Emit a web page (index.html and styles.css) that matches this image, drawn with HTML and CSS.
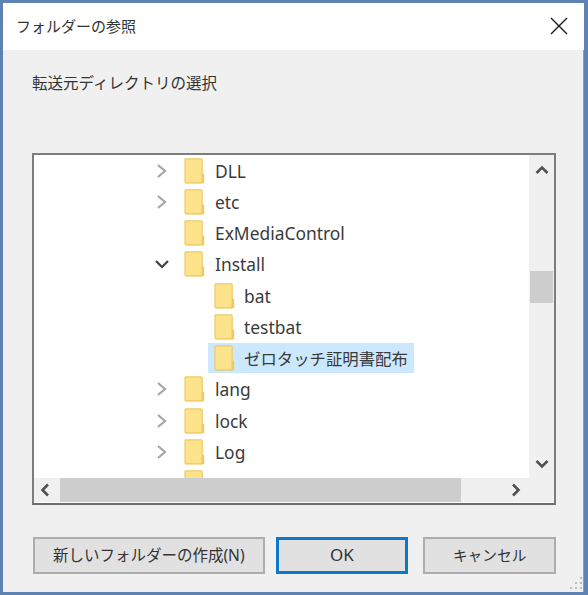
FILE: index.html
```html
<!DOCTYPE html>
<html lang="ja">
<head>
    <meta charset="UTF-8">
    <title>フォルダーの参照</title>
    <link rel="stylesheet" href="styles.css">
</head>
<body>
    <svg class="defs" width="0" height="0">
        <symbol id="folder" viewBox="0 0 21 26">
            <path d="M1 1.5 Q1 .8 1.8 .8 H17 Q18.2 .8 18.2 2 V24.8 H2 Q1 24.8 1 24 Z" fill="#fde38c" stroke="#eecb68" stroke-width="1.2"/>
            <path d="M18 15.5 H19.2 Q20.2 15.5 20.2 16.5 V24.2 Q20.2 25.2 19.2 25.2 H2 Q1.4 25.2 1 24.6 H17.6 Z" fill="#f1c95f"/>
        </symbol>
        <symbol id="chev-right" viewBox="0 0 14 16">
            <path d="M3 2 L10 8 L3 14" fill="none" stroke="#a6a6a6" stroke-width="2.2"/>
        </symbol>
        <symbol id="chev-down" viewBox="0 0 14 16">
            <path d="M1 5 L7 11 L13 5" fill="none" stroke="#404040" stroke-width="2.2"/>
        </symbol>
    </svg>

    <div class="dialog">
        <div class="titlebar">
            <span class="title">フォルダーの参照</span>
            <svg class="close" width="18" height="18" viewBox="0 0 18 18">
                <path d="M1 1 L17 17 M17 1 L1 17" stroke="#1a1a1a" stroke-width="1.4" fill="none"/>
            </svg>
        </div>

        <div class="content">
            <p class="prompt">転送元ディレクトリの選択</p>

            <div class="tree-box">
                <div class="tree">
                    <div class="row">
                        <svg class="chev"><use href="#chev-right"/></svg>
                        <svg class="folder"><use href="#folder"/></svg>
                        <span class="name">DLL</span>
                    </div>
                    <div class="row">
                        <svg class="chev"><use href="#chev-right"/></svg>
                        <svg class="folder"><use href="#folder"/></svg>
                        <span class="name">etc</span>
                    </div>
                    <div class="row">
                        <span class="chev"></span>
                        <svg class="folder"><use href="#folder"/></svg>
                        <span class="name">ExMediaControl</span>
                    </div>
                    <div class="row">
                        <svg class="chev"><use href="#chev-down"/></svg>
                        <svg class="folder"><use href="#folder"/></svg>
                        <span class="name">Install</span>
                    </div>
                    <div class="row child">
                        <svg class="folder"><use href="#folder"/></svg>
                        <span class="name">bat</span>
                    </div>
                    <div class="row child">
                        <svg class="folder"><use href="#folder"/></svg>
                        <span class="name">testbat</span>
                    </div>
                    <div class="row child">
                        <div class="sel-box">
                            <svg class="folder"><use href="#folder"/></svg>
                            <span class="name">ゼロタッチ証明書配布</span>
                        </div>
                    </div>
                    <div class="row">
                        <svg class="chev"><use href="#chev-right"/></svg>
                        <svg class="folder"><use href="#folder"/></svg>
                        <span class="name">lang</span>
                    </div>
                    <div class="row">
                        <svg class="chev"><use href="#chev-right"/></svg>
                        <svg class="folder"><use href="#folder"/></svg>
                        <span class="name">lock</span>
                    </div>
                    <div class="row">
                        <svg class="chev"><use href="#chev-right"/></svg>
                        <svg class="folder"><use href="#folder"/></svg>
                        <span class="name">Log</span>
                    </div>
                    <div class="row">
                        <span class="chev"></span>
                        <svg class="folder"><use href="#folder"/></svg>
                    </div>
                </div>

                <div class="vscroll">
                    <svg class="arrow" width="14" height="10" viewBox="0 0 14 10">
                        <path d="M1.5 8 L7 2.5 L12.5 8" fill="none" stroke="#505050" stroke-width="2.6"/>
                    </svg>
                    <div class="vthumb"></div>
                    <svg class="arrow arrow-end" width="14" height="10" viewBox="0 0 14 10">
                        <path d="M1.5 2 L7 7.5 L12.5 2" fill="none" stroke="#505050" stroke-width="2.6"/>
                    </svg>
                </div>

                <div class="hscroll">
                    <svg class="arrow-h" width="10" height="14" viewBox="0 0 10 14">
                        <path d="M8 1.5 L2.5 7 L8 12.5" fill="none" stroke="#505050" stroke-width="2.6"/>
                    </svg>
                    <div class="hthumb"></div>
                    <svg class="arrow-h" width="10" height="14" viewBox="0 0 10 14">
                        <path d="M2 1.5 L7.5 7 L2 12.5" fill="none" stroke="#505050" stroke-width="2.6"/>
                    </svg>
                </div>
                <div class="corner"></div>
            </div>

            <div class="buttons">
                <button class="btn btn-new" type="button">新しいフォルダーの作成(N)</button>
                <button class="btn btn-ok" type="button">OK</button>
                <button class="btn btn-cancel" type="button">キャンセル</button>
            </div>
        </div>

        <svg class="grip" width="14" height="14" viewBox="0 0 14 14">
            <path d="M10 1h2v2h-2z M5 6h2v2h-2z M10 6h2v2h-2z M0 11h2v2h-2z M5 11h2v2h-2z M10 11h2v2h-2z" fill="#bcbcbc"/>
        </svg>
    </div>
</body>
</html>
```

FILE: styles.css
```css
* {
    box-sizing: border-box;
}
html, body {
    margin: 0;
    height: 100%;
}
body {
    font-family: "Noto Sans", "Noto Sans CJK JP", sans-serif;
    color: #333;
    overflow: hidden;
}
.defs {
    position: absolute;
}
.dialog {
    position: relative;
    width: 588px;
    height: 595px;
    display: flex;
    flex-direction: column;
    border: 3px solid #5d82b3;
    border-right-width: 4px;
    background: #f0f0f0;
}
.titlebar {
    height: 47px;
    flex: none;
    background: #fff;
    display: flex;
    align-items: center;
    justify-content: space-between;
    padding: 0 16px 0 13px;
}
.title {
    font-size: 15px;
    margin-top: -2px;
}
.close {
    margin-top: -2px;
}
.content {
    flex: 1;
    padding: 0 27px 0 29px;
    border-right: 1px solid #9a9a9a;
}
.prompt {
    margin: 0;
    padding-top: 21px;
    height: 103px;
    font-size: 15.5px;
    line-height: 24px;
}
.tree-box {
    width: 524px;
    height: 352px;
    border: 2px solid #7d7d7d;
    border-bottom-color: #6c6c6c;
    background: #fff;
    display: grid;
    grid-template-columns: 1fr 25px;
    grid-template-rows: 1fr 25px;
}
.tree {
    overflow: hidden;
    min-height: 0;
}
.row {
    height: 31.25px;
    display: flex;
    align-items: center;
    padding-left: 121px;
    font-size: 17.4px;
}
.row.child {
    padding-left: 180px;
}
.chev {
    width: 14px;
    height: 16px;
    flex: none;
    margin-right: 15px;
}
.folder {
    width: 21px;
    height: 26px;
    flex: none;
    margin-right: 10px;
}
.row.child .folder {
    margin-right: 9px;
}
.name {
    white-space: nowrap;
    color: #3a3a3a;
}
.sel-box {
    display: flex;
    align-items: center;
    height: 30px;
    width: 206px;
    margin-left: -6px;
    padding-left: 6px;
    background: #cce8ff;
    font-size: 16.4px;
}
.vscroll {
    background: #f0f0f0;
    display: flex;
    flex-direction: column;
    align-items: center;
    padding-top: 10px;
}
.vthumb {
    width: 23px;
    height: 32px;
    margin-top: 96px;
    background: #cdcdcd;
}
.arrow-end {
    margin-top: auto;
    margin-bottom: 9px;
}
.hscroll {
    background: #f0f0f0;
    display: flex;
    align-items: center;
    padding-left: 6px;
    padding-right: 8px;
    margin-bottom: 1px;
}
.hthumb {
    width: 401px;
    height: 100%;
    margin: 0 auto 0 10px;
    background: #cdcdcd;
}
.corner {
    background: #f0f0f0;
    margin-bottom: 1px;
}
.buttons {
    display: flex;
    margin-top: 32px;
    padding-left: 1px;
}
.btn {
    height: 37px;
    border: 2px solid #adadad;
    background: #e1e1e1;
    color: #333;
    font-family: "Noto Sans", "Noto Sans CJK JP", sans-serif;
    font-size: 15.5px;
    padding: 0 0 3px;
}
.btn-new {
    width: 232px;
}
.btn-ok {
    width: 133px;
    margin-left: 11px;
    border: 3px solid #0f77c8;
    font-size: 17px;
}
.btn-cancel {
    width: 133px;
    margin-left: 15px;
    font-size: 14.7px;
}
.grip {
    position: absolute;
    right: 0;
    bottom: 2px;
}
```
